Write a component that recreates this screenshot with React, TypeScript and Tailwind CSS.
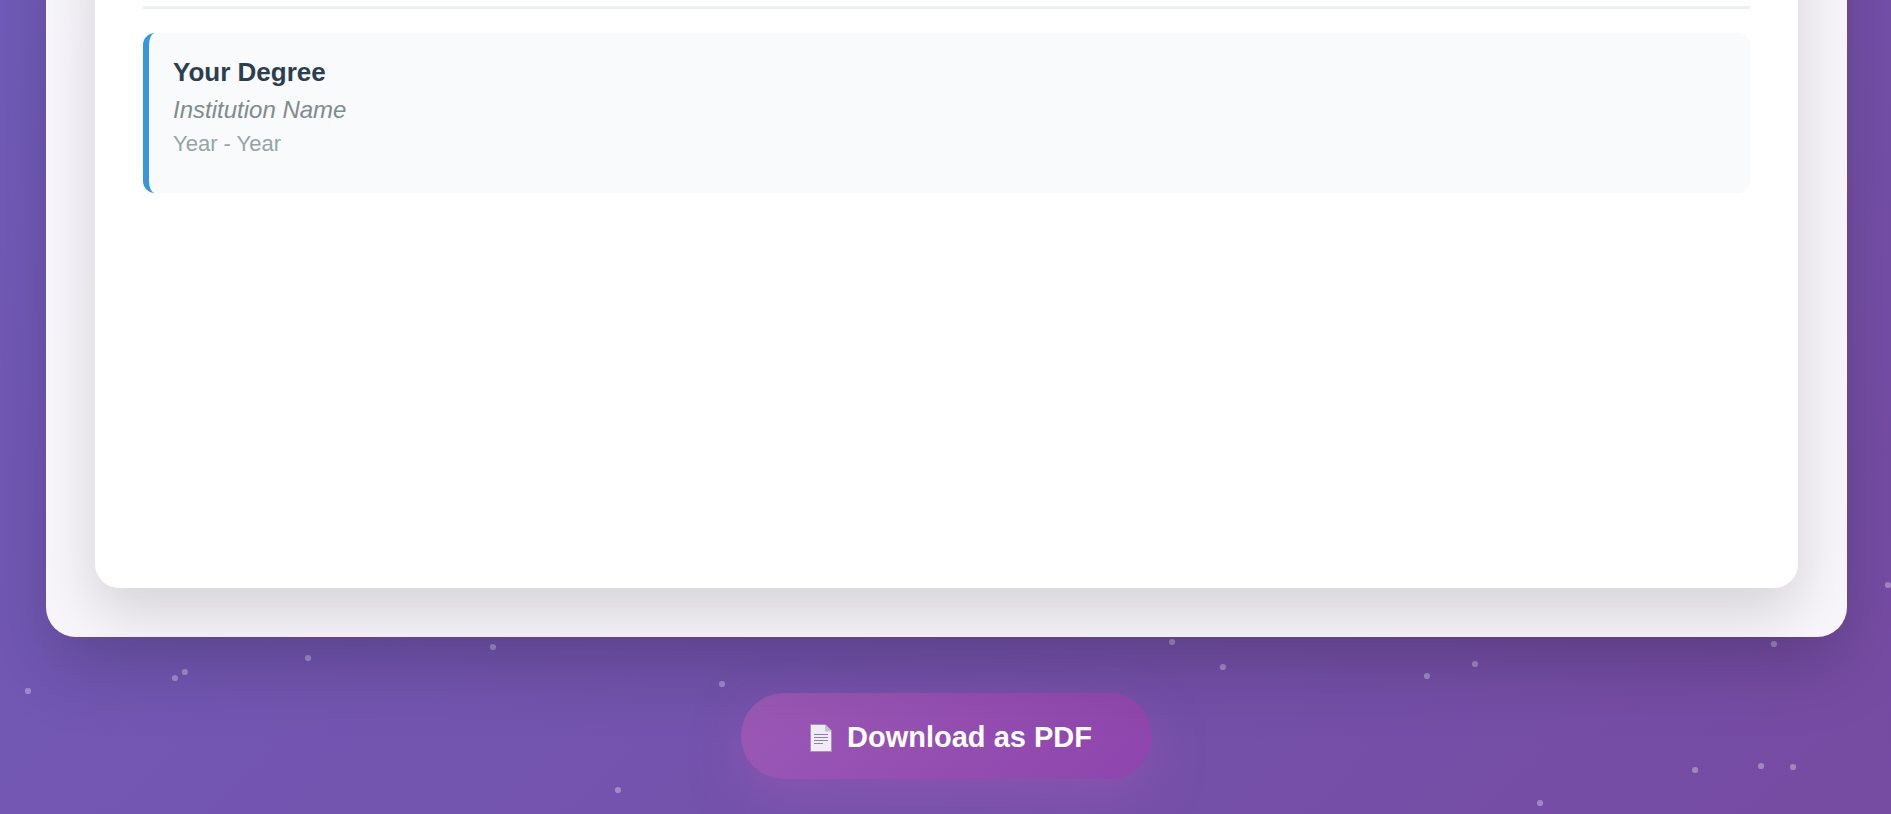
import React from "react";

type Star = { x: string; y: number };

const stars: Star[] = [
  { x: "1.48%", y: 691 },
  { x: "9.25%", y: 678 },
  { x: "9.78%", y: 672 },
  { x: "16.29%", y: 658 },
  { x: "26.07%", y: 647 },
  { x: "38.18%", y: 684 },
  { x: "32.68%", y: 790 },
  { x: "61.98%", y: 642 },
  { x: "64.67%", y: 667 },
  { x: "75.46%", y: 676 },
  { x: "78%", y: 664 },
  { x: "93.81%", y: 644 },
  { x: "99.84%", y: 585 },
  { x: "89.64%", y: 770 },
  { x: "93.13%", y: 766 },
  { x: "94.82%", y: 767 },
  { x: "81.44%", y: 803 },
];

function StarField() {
  return (
    <svg className="pointer-events-none absolute inset-0 h-full w-full" aria-hidden="true">
      {stars.map((star) => (
        <circle key={star.x} cx={star.x} cy={star.y} r="3.1" fill="#ffffff" fillOpacity="0.32" />
      ))}
    </svg>
  );
}

function PageIcon() {
  return (
    <svg className="h-7 w-6 shrink-0" viewBox="0 0 24 28" aria-hidden="true">
      <path d="M1.5 .5H16.5L22.5 6.5V27.5H1.5Z" fill="#f1ebf6" stroke="#a493b0" strokeWidth="1" strokeLinejoin="round" />
      <path d="M16 1V7.5H22V6.5L16.5 1Z" fill="#cbbfd6" />
      <path d="M5 10.5H19M5 13.5H19M5 16.5H19M5 19.5H14" stroke="#8f82a0" strokeWidth="1" />
    </svg>
  );
}

function EducationCard() {
  return (
    <article className="mt-6 flex flex-col gap-1.5 rounded-xl border-l-6 border-[#3498db] bg-[#f8fafc] px-6 pt-6 pb-[38px]">
      <h3 className="text-[26px] leading-[30px] font-bold text-[#2c3e50]">Your Degree</h3>
      <p className="text-2xl leading-[34px] text-[#7f8c8d] italic">Institution Name</p>
      <p className="text-[22px] leading-[22px] text-[#95a5a6]">Year - Year</p>
    </article>
  );
}

export default function App() {
  return (
    <main className="relative isolate flex min-h-screen flex-col overflow-hidden bg-[linear-gradient(135deg,#715cba,#764ba2)] pr-11 pb-[35px] pl-[46px] font-['Liberation_Sans',Arial,sans-serif]">
      <StarField />
      <div className="relative z-10 -mt-40 rounded-[30px] bg-white/95 px-[49px] pb-[49px] shadow-[0_30px_72px_rgba(0,0,0,0.18)]">
        <section className="min-h-[748px] rounded-3xl bg-white px-12 pt-[166px] shadow-[0_24px_60px_rgba(0,0,0,0.15)]">
          <hr className="border-t-3 border-[#ecf0f1]" />
          <EducationCard />
        </section>
      </div>
      <button
        type="button"
        className="mt-14 flex h-[86px] items-center gap-3.5 self-center rounded-full bg-[linear-gradient(135deg,#9b59b6,#8e44ad)] pt-1 pr-[60px] pl-[68px] text-[29px] font-bold text-white shadow-[0_18px_48px_rgba(155,89,182,0.5)]"
      >
        <PageIcon />
        Download as PDF
      </button>
    </main>
  );
}
